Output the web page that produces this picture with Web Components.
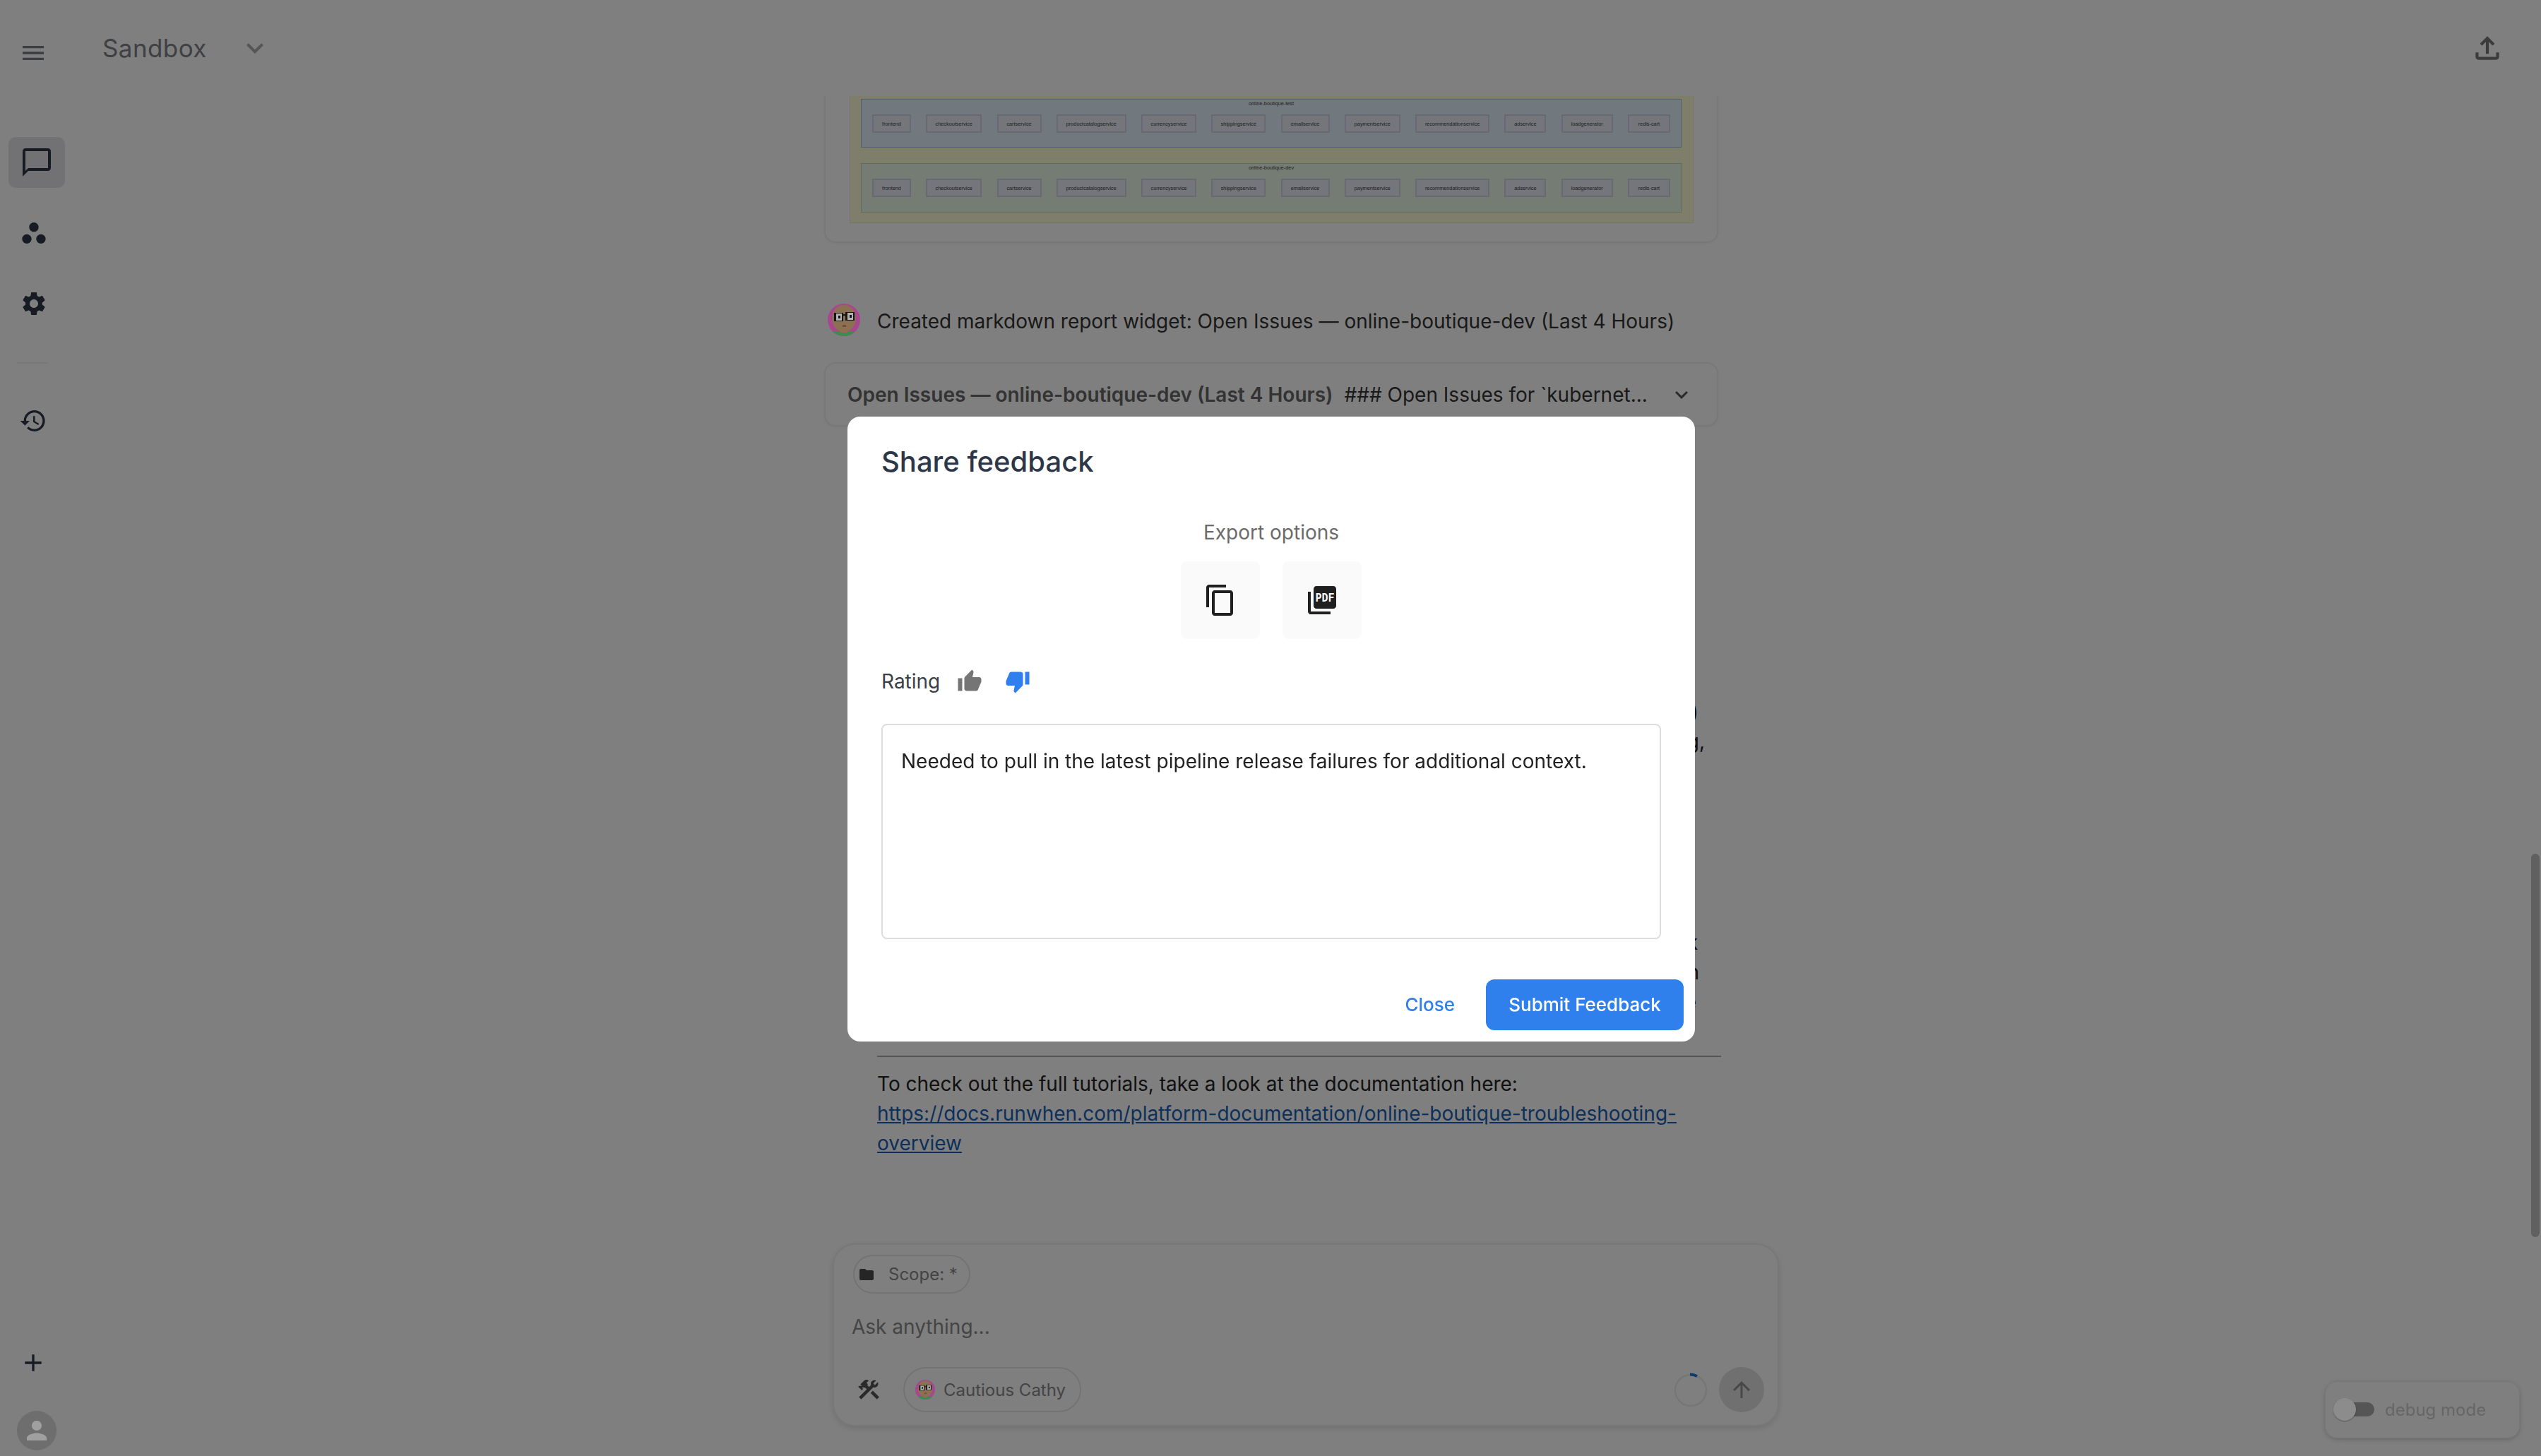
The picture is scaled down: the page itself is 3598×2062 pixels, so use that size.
<!DOCTYPE html>
<html lang="en">
<head>
<meta charset="utf-8">
<title>Sandbox</title>
<style>
html,body{margin:0;height:100%;background:#fff;overflow:hidden;font-family:Inter,"Liberation Sans",sans-serif;color:#222}
</style>
</head>
<body>
<app-shell>
  <side-nav slot="side"></side-nav>
  <top-bar slot="top"></top-bar>
  <chat-thread slot="thread">
    <chart-card></chart-card>
    <msg-row>Created markdown report widget: Open Issues — online-boutique-dev (Last 4 Hours)</msg-row>
    <report-card title-text="Open Issues — online-boutique-dev (Last 4 Hours)">### Open Issues for `kubernet...</report-card>
    <hidden-report></hidden-report>
    <tutorial-note></tutorial-note>
  </chat-thread>
  <composer-box slot="composer"></composer-box>
</app-shell>
<feedback-modal></feedback-modal>
<user-badge></user-badge>
<debug-toggle></debug-toggle>

<script>
const PATHS={
menu:'M3 18h18v-2H3v2zm0-5h18v-2H3v2zm0-7v2h18V6H3z',
chat:'M20 2H4c-1.1 0-2 .9-2 2v18l4-4h14c1.1 0 2-.9 2-2V4c0-1.1-.9-2-2-2zm0 14H6l-2 2V4h16v12z',
workspaces:'M6 13c-2.2 0-4 1.8-4 4s1.8 4 4 4 4-1.8 4-4-1.8-4-4-4zm6-10C9.8 3 8 4.8 8 7s1.8 4 4 4 4-1.8 4-4-1.8-4-4-4zm6 10c-2.2 0-4 1.8-4 4s1.8 4 4 4 4-1.8 4-4-1.8-4-4-4z',
settings:'M19.14 12.94c.04-.3.06-.61.06-.94 0-.32-.02-.64-.07-.94l2.03-1.58c.18-.14.23-.41.12-.61l-1.92-3.32c-.12-.22-.37-.29-.59-.22l-2.39.96c-.5-.38-1.03-.7-1.62-.94l-.36-2.54c-.04-.24-.24-.41-.48-.41h-3.84c-.24 0-.43.17-.47.41l-.36 2.54c-.59.24-1.13.57-1.62.94l-2.39-.96c-.22-.08-.47 0-.59.22L2.74 8.87c-.12.21-.08.47.12.61l2.03 1.58c-.05.3-.09.63-.09.94s.02.64.07.94l-2.03 1.58c-.18.14-.23.41-.12.61l1.92 3.32c.12.22.37.29.59.22l2.39-.96c.5.38 1.03.7 1.62.94l.36 2.54c.05.24.24.41.48.41h3.84c.24 0 .44-.17.47-.41l.36-2.54c.59-.24 1.13-.56 1.62-.94l2.39.96c.22.08.47 0 .59-.22l1.92-3.32c.12-.22.07-.47-.12-.61l-2.01-1.58zM12 15.6c-1.98 0-3.6-1.62-3.6-3.6s1.62-3.6 3.6-3.6 3.6 1.62 3.6 3.6-1.62 3.6-3.6 3.6z',
history:'M13 3c-4.97 0-9 4.03-9 9H1l3.89 3.89.07.14L9 12H6c0-3.87 3.13-7 7-7s7 3.13 7 7-3.13 7-7 7c-1.93 0-3.68-.79-4.94-2.06l-1.42 1.42C8.27 19.99 10.51 21 13 21c4.97 0 9-4.03 9-9s-4.03-9-9-9zm-1 5v5l4.28 2.54.72-1.21-3.5-2.08V8H12z',
add:'M19 13h-6v6h-2v-6H5v-2h6V5h2v6h6v2z',
expand:'M16.59 8.59 12 13.17 7.41 8.59 6 10l6 6 6-6z',
upload:'M18 15v3H6v-3H4v3c0 1.1.9 2 2 2h12c1.1 0 2-.9 2-2v-3h-2zM7 9l1.41 1.41L11 7.83V16h2V7.83l2.59 2.58L17 9l-5-5-5 5z',
copy:'M16 1H4c-1.1 0-2 .9-2 2v14h2V3h12V1zm3 4H8c-1.1 0-2 .9-2 2v14c0 1.1.9 2 2 2h11c1.1 0 2-.9 2-2V7c0-1.1-.9-2-2-2zm0 16H8V7h11v14z',
up:'M1 21h4V9H1v12zm22-11c0-1.1-.9-2-2-2h-6.31l.95-4.57.03-.32c0-.41-.17-.79-.44-1.06L14.17 1 7.59 7.59C7.22 7.95 7 8.45 7 9v10c0 1.1.9 2 2 2h9c.83 0 1.54-.5 1.84-1.22l3.02-7.05c.09-.23.14-.47.14-.73v-2z',
down:'M15 3H6c-.83 0-1.54.5-1.84 1.22l-3.02 7.05c-.09.23-.14.47-.14.73v2c0 1.1.9 2 2 2h6.31l-.95 4.57-.03.32c0 .41.17.79.44 1.06L9.83 23l6.59-6.59c.36-.36.58-.86.58-1.41V5c0-1.1-.9-2-2-2zm4 0v12h4V3h-4z',
folder:'M10 4H4c-1.1 0-1.99.9-1.99 2L2 18c0 1.1.9 2 2 2h16c1.1 0 2-.9 2-2V8c0-1.1-.9-2-2-2h-8l-2-2z',
tools:'m13.783 15.172 2.121-2.121 5.996 5.996-2.121 2.121zM17.5 10c1.93 0 3.5-1.57 3.5-3.5 0-.58-.16-1.12-.41-1.6l-2.7 2.7-1.49-1.49 2.7-2.7c-.48-.25-1.02-.41-1.6-.41C15.57 3 14 4.57 14 6.5c0 .41.08.8.21 1.16l-1.85 1.85-1.78-1.78.71-.71-1.41-1.41L12 3.49c-1.17-1.17-3.07-1.17-4.24 0L4.22 7.03l1.41 1.41H2.81l-.71.71 3.54 3.54.71-.71V9.15l1.41 1.41.71-.71 1.78 1.78-7.41 7.41 2.12 2.12L16.34 9.79c.36.13.75.21 1.16.21z',
arrowup:'M4 12l1.41 1.41L11 7.83V20h2V7.83l5.58 5.59L20 12l-8-8-8 8z',
person:'M12 12c2.21 0 4-1.79 4-4s-1.79-4-4-4-4 1.79-4 4 1.79 4 4 4zm0 2c-2.67 0-8 1.34-8 4v2h16v-2c0-2.66-5.33-4-8-4z'
};
class Comp extends HTMLElement{
  connectedCallback(){
    if(this.shadowRoot)return;
    this.attachShadow({mode:'open'}).innerHTML=this.render();
  }
}
const def=(n,render)=>customElements.define(n,class extends Comp{render(){return render(this)}});

def('m-icon',el=>{
  const s=el.getAttribute('size')||48,c=el.getAttribute('color')||'currentColor';
  return `<style>:host{display:inline-flex;flex:none;width:${s}px;height:${s}px;line-height:0}svg{width:100%;height:100%;display:block}</style>
  <svg viewBox="0 0 24 24" fill="${c}"><path d="${PATHS[el.getAttribute('name')]}"/></svg>`;
});

def('pdf-icon',()=>`<style>:host{display:inline-flex;width:48px;height:48px}svg{width:100%;height:100%;display:block}text{font-family:"DejaVu Sans Mono",monospace;font-weight:700;font-size:7.6px;fill:#fafafa}</style>
<svg viewBox="0 0 24 24" fill="#1f1f1f"><path d="M20 2H8c-1.1 0-2 .9-2 2v12c0 1.1.9 2 2 2h12c1.1 0 2-.9 2-2V4c0-1.1-.9-2-2-2z"/><path d="M4 6H2v14c0 1.1.9 2 2 2h14v-2H4V6z"/><text x="7.2" y="12.9" textLength="13.6" lengthAdjust="spacingAndGlyphs">PDF</text></svg>`);

def('bot-avatar',el=>{
  const s=el.getAttribute('size')||46;
  return `<style>:host{display:inline-flex;flex:none;position:relative;z-index:60;width:${s}px;height:${s}px}svg{width:100%;height:100%;display:block}</style>
  <svg viewBox="0 0 46 46"><defs><clipPath id="c"><circle cx="23" cy="23" r="23"/></clipPath></defs>
  <g clip-path="url(#c)"><rect width="46" height="46" fill="#a8478f"/>
  <ellipse cx="23" cy="21" rx="17" ry="19" fill="#8c7052"/>
  <rect x="6" y="39" width="34" height="7" fill="#3e8a50"/>
  <rect x="18" y="33" width="10" height="8" fill="#8c7052"/>
  <rect x="9" y="13" width="13" height="12" fill="#161616"/><rect x="25" y="12" width="13" height="12" fill="#161616"/>
  <rect x="22" y="15" width="3" height="2" fill="#161616"/>
  <rect x="12" y="14" width="8" height="10" fill="#b4b4b4"/><rect x="28" y="13" width="8" height="10" fill="#b4b4b4"/>
  <rect x="15" y="17" width="3" height="4" fill="#111"/><rect x="31" y="16" width="3" height="4" fill="#111"/>
  <rect x="21" y="30" width="5" height="3" fill="#7a4a3a"/></g></svg>`;
});

def('app-shell',()=>`<style>
:host{display:grid;grid-template-columns:96px 1fr;height:100vh;overflow:hidden;background:#fff}
.main{display:flex;flex-direction:column;min-width:0;height:100vh;position:relative}
.thumb{position:absolute;right:2px;top:1209px;width:12px;height:543px;border-radius:6px;background:#c0c0c0}
</style>
<slot name="side"></slot>
<div class="main"><slot name="top"></slot><slot name="thread"></slot><slot name="composer"></slot><div class="thumb"></div></div>`);

def('side-nav',()=>`<style>
:host{display:flex;flex-direction:column;height:100vh;box-sizing:border-box;padding-bottom:112px;color:#2d3748}
.i{margin-left:28px}
.sel{margin:99px 0 0 12px;width:80px;height:72px;border-radius:10px;background:#e4e5e8;display:flex;align-items:center;justify-content:center}
.rule{margin:63px 0 0 24px;width:44px;height:2px;background:#f0f0f0}
.sp{flex:1}
</style>
<m-icon class="i" name="menu" size="40" color="#747a84" style="margin-top:55px;margin-left:27px"></m-icon>
<div class="sel"><m-icon name="chat" size="48"></m-icon></div>
<m-icon class="i" name="workspaces" size="40" style="margin-top:44px"></m-icon>
<m-icon class="i" name="settings" size="40" style="margin-top:60px"></m-icon>
<div class="rule"></div>
<m-icon class="i" name="history" size="40" style="margin-top:61px;margin-left:27px"></m-icon>
<div class="sp"></div>
<m-icon class="i" name="add" size="40" style="margin-left:27px"></m-icon>`);

def('top-bar',()=>`<style>
:host{display:flex;align-items:center;flex:none;height:136px;padding:0 51px 0 49px;background:#fff;box-sizing:border-box}
.t{font-size:35px;color:#7e8088;line-height:1;letter-spacing:.4px}
.c{margin-left:44px}.sp{flex:1}
</style>
<span class="t">Sandbox</span><m-icon class="c" name="expand" size="48" color="#aaa"></m-icon><span class="sp"></span><m-icon name="upload" size="50" color="#777"></m-icon>`);

def('chat-thread',()=>`<style>
:host{display:block;flex:1;min-height:0;overflow:hidden;padding-right:94px}
.col{width:1266px;margin:0 auto;font-size:28px;line-height:42px}
</style><div class="col"><slot></slot></div>`);

def('svc-node',el=>`<style>
:host{display:flex;align-items:center;justify-content:center;box-sizing:border-box;flex:none;width:${el.getAttribute('w')}px;height:26px;border:2px solid #d2d2e8;background:#ebebf8;font:7.3px "Liberation Sans",sans-serif;color:#444}
</style><slot></slot>`);

const SVC=[['frontend',55],['checkoutservice',79],['cartservice',63],['productcatalogservice',99],['currencyservice',78],['shippingservice',77],['emailservice',69],['paymentservice',79],['recommendationservice',105],['adservice',59],['loadgenerator',73],['redis-cart',60]];
def('ns-group',el=>`<style>
:host{display:block;box-sizing:border-box;height:${el.getAttribute('h')}px;padding:0 15px 0 15px;border:1px solid ${el.getAttribute('line')};background:${el.getAttribute('bg')}}
.l{height:12px;line-height:12px;margin-bottom:9px;text-align:center;font:7.3px/12px "Liberation Sans",sans-serif;color:#444}
.r{display:flex;justify-content:space-between}
</style><div class="l">${el.getAttribute('label')}</div><div class="r">${SVC.map(s=>`<svc-node w="${s[1]}">${s[0]}</svc-node>`).join('')}</div>`);

def('chart-card',()=>`<style>
:host{display:block;box-sizing:border-box;margin-top:-40px;padding:2px 33px 26px 34px;border:2px solid #f1f1f1;border-radius:16px;box-shadow:0 1px 3px rgba(0,0,0,.06)}
.d{background:#fdfdd4;border:1px solid #f0f0c4;padding:39px 16px 14px 15px;box-sizing:border-box}
ns-group+ns-group{margin-top:22px}
</style><div class="d"><ns-group label="online-boutique-test" h="69" bg="#e4f2fd" line="#a0c0e0"></ns-group><ns-group label="online-boutique-dev" h="70" bg="#ebf8e6" line="#c0d8c0"></ns-group></div>`);

def('msg-row',()=>`<style>
:host{display:flex;align-items:center;margin-top:86px;padding-left:5px;height:46px;gap:24px;color:#333}
span{padding-top:4px;white-space:nowrap}
</style><bot-avatar size="46"></bot-avatar><span><slot></slot></span>`);

def('report-card',el=>`<style>
:host{display:flex;align-items:center;box-sizing:border-box;height:91px;margin-top:37px;padding:0 32px 0 31px;border:2px solid #f1f1f1;border-radius:16px;box-shadow:0 1px 3px rgba(0,0,0,.06);white-space:nowrap}
b{font-weight:600;color:#666}.x{margin-left:16px;color:#333}.sp{flex:1}
</style><b>${el.getAttribute('title-text')}</b><span class="x"><slot></slot></span><span class="sp"></span><m-icon name="expand" size="36" color="#555"></m-icon>`);

def('hidden-report',()=>`<style>
:host{display:block;margin-top:383px;text-align:right;color:#222}
div{height:42px}
.g{margin-top:243px}
</style>
<div style="padding-right:28px">)</div><div style="padding-right:19px">g,</div>
<div class="g" style="padding-right:29px">k</div><div style="padding-right:27px">n</div><div style="padding-right:31px">e</div>`);

def('tutorial-note',()=>`<style>
:host{display:block;margin:55px -4px 0 75px;color:#222}
hr{margin:0 0 17px;border:0;height:2px;background:#aaa}
a{color:#1a5fb4;text-decoration:underline}
</style><hr><div>To check out the full tutorials, take a look at the documentation here:</div><div><a href="#">https://docs.runwhen.com/platform-documentation/online-boutique-troubleshooting-overview</a></div>`);

def('chip-pill',el=>`<style>
:host{display:inline-flex;align-items:center;box-sizing:border-box;height:${el.getAttribute('h')}px;padding:0 ${el.getAttribute('pr')}px 0 ${el.getAttribute('pl')}px;gap:${el.getAttribute('gap')}px;border:2px solid #e6e6e6;border-radius:32px;font-size:24px;color:#888;white-space:nowrap}
</style><slot name="i"></slot><slot></slot>`);

def('composer-box',()=>`<style>
:host{display:flex;flex-direction:column;flex:none;box-sizing:border-box;width:1340px;height:259px;margin:0 0 42px 1083px;padding:14px 19px 18px 31px;border:2px solid #f0f0f0;border-radius:32px;box-shadow:0 3px 8px rgba(0,0,0,.12);background:#fff}
.ask{margin:26px 0 0 -6px;font-size:28px;line-height:42px;color:#8a8a8a}
.row{display:flex;align-items:center;height:64px;margin-top:36px}
.sp{flex:1}
.spin{width:46px;height:48px;margin-right:17px;flex:none}
.send{width:64px;height:64px;border-radius:50%;background:#e0e0e0;display:flex;align-items:center;justify-content:center;flex:none}
chip-pill.a{margin-left:31px}
chip-pill.s{align-self:flex-start;margin-left:-4px}
</style>
<chip-pill class="s" h="55" pl="5" pr="16" gap="19"><m-icon slot="i" name="folder" size="24" color="#4a4a4a"></m-icon>Scope: *</chip-pill>
<div class="ask">Ask anything...</div>
<div class="row"><m-icon name="tools" size="36" color="#555"></m-icon>
<chip-pill class="a" h="64" pl="15" pr="20" gap="12"><bot-avatar slot="i" size="28"></bot-avatar>Cautious Cathy</chip-pill>
<span class="sp"></span>
<svg class="spin" viewBox="0 0 46 48"><circle cx="23" cy="25" r="22" fill="none" stroke="#ececec" stroke-width="2.5"/><path d="M22 2.5A22 22 0 0 1 32 5" fill="none" stroke="#1976d2" stroke-width="4"/></svg>
<div class="send"><m-icon name="arrowup" size="36" color="#909090"></m-icon></div></div>`);

def('export-btn',()=>`<style>
:host{display:flex;align-items:center;justify-content:center;width:112px;height:110px;border-radius:8px;background:#fafafa;flex:none}
</style><slot></slot>`);

def('feedback-modal',()=>`<style>
:host{position:fixed;inset:0;z-index:50;display:flex;align-items:center;justify-content:center;padding:3px 0 0 2px;background:rgba(0,0,0,.5)}
.d{box-sizing:border-box;width:1200px;height:885px;background:#fff;border-radius:18px;display:flex;flex-direction:column;font-size:28px;line-height:42px}
h2{margin:34px 48px 0;font-size:40px;font-weight:500;line-height:60px;color:#2d3748}
.lab{margin-top:49px;text-align:center;color:#6b6b6b}
.ex{display:flex;justify-content:center;gap:32px;margin-top:20px}
.rate{display:flex;align-items:center;margin:39px 48px 0;color:#3a4048}
.rate span{width:106.5px;flex:none}
.rate m-icon+m-icon{margin-left:32px}
.ta{box-sizing:border-box;height:305px;margin:39px 48px 0;padding:30px 26px;border:2px solid #ddd;border-radius:8px;color:#222}
.ft{display:flex;align-items:center;justify-content:flex-end;margin-top:57px;padding-right:16px;font-size:26px}
.cl{margin-right:44px;color:#2f80ed;font-weight:500}
.sub{box-sizing:border-box;width:280px;height:72px;display:flex;align-items:center;justify-content:center;border-radius:12px;background:#2f80ed;color:#fff;font-weight:500}
</style>
<div class="d"><h2>Share feedback</h2>
<div class="lab">Export options</div>
<div class="ex"><export-btn><m-icon name="copy" size="48" color="#1f1f1f"></m-icon></export-btn><export-btn><pdf-icon></pdf-icon></export-btn></div>
<div class="rate"><span>Rating</span><m-icon name="up" size="36" color="#757575"></m-icon><m-icon name="down" size="36" color="#2f80ed"></m-icon></div>
<div class="ta">Needed to pull in the latest pipeline release failures for additional context.</div>
<div class="ft"><span class="cl">Close</span><span class="sub">Submit Feedback</span></div></div>`);

def('user-badge',()=>`<style>
:host{position:fixed;left:24px;top:1998px;z-index:60;width:56px;height:56px;border-radius:50%;background:#6e6e6e;display:flex;align-items:center;justify-content:center}
</style><m-icon name="person" size="42" color="#a0a0a0"></m-icon>`);

def('debug-toggle',()=>`<style>
:host{position:fixed;left:3292px;top:1956px;z-index:60;box-sizing:border-box;width:276px;height:81px;border-radius:18px;border:1px solid #777;box-shadow:0 2px 6px rgba(0,0,0,.18);display:flex;align-items:center;padding-left:11px;gap:15px;font-size:24px;color:#666}
.sw{position:relative;width:58px;height:20px;flex:none;margin-top:-1px}
.tr{position:absolute;left:18px;right:0;top:0;bottom:0;border-radius:10px;background:#555}
.kn{position:absolute;left:0;top:-6px;width:32px;height:32px;border-radius:50%;background:#8c8c8c;box-shadow:0 1px 2px rgba(0,0,0,.3)}
</style><div class="sw"><div class="tr"></div><div class="kn"></div></div><span>debug mode</span>`);
</script>
</body>
</html>
